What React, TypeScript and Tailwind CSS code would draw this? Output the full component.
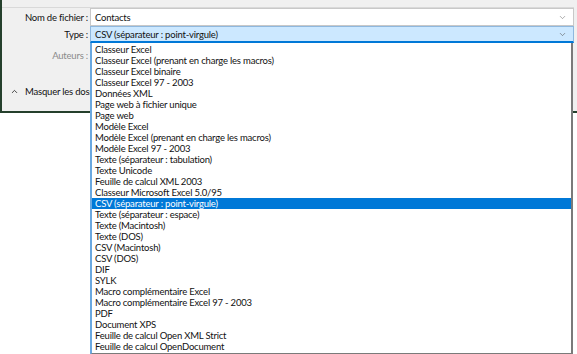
import { ChevronDown, ChevronUp } from 'lucide-react'

const formats = [
    'Classeur Excel',
    'Classeur Excel (prenant en charge les macros)',
    'Classeur Excel binaire',
    'Classeur Excel 97 - 2003',
    'Données XML',
    'Page web à fichier unique',
    'Page web',
    'Modèle Excel',
    'Modèle Excel (prenant en charge les macros)',
    'Modèle Excel 97 - 2003',
    'Texte (séparateur : tabulation)',
    'Texte Unicode',
    'Feuille de calcul XML 2003',
    'Classeur Microsoft Excel 5.0/95',
    'CSV (séparateur : point-virgule)',
    'Texte (séparateur : espace)',
    'Texte (Macintosh)',
    'Texte (DOS)',
    'CSV (Macintosh)',
    'CSV (DOS)',
    'DIF',
    'SYLK',
    'Macro complémentaire Excel',
    'Macro complémentaire Excel 97 - 2003',
    'PDF',
    'Document XPS',
    'Feuille de calcul Open XML Strict',
    'Feuille de calcul OpenDocument',
]

const selected = 'CSV (séparateur : point-virgule)'

export default function App() {
    return (
        <div className="relative h-[354px] w-[577px] overflow-hidden bg-white text-[9.5px] leading-[11px] tracking-[-0.2px] text-[#111] [font-family:Lato,'Open_Sans',sans-serif]">
            {/* save dialog behind the dropdown */}
            <div className="flex h-[113px] flex-col border-b-2 border-l-2 border-[#25402c] bg-[#f0f0f0] pr-[3px]">
                <div className="h-[8px] border-b border-[#d9d9d9]" />
                <div className="flex h-[18px] items-center">
                    <div className="w-[88px] pr-[2px] text-right">Nom de fichier :</div>
                    <div className="flex h-full flex-1 items-center justify-between border border-[#c8c8c8] bg-white pl-[4px] pr-[6px]">
                        <span>Contacts</span>
                        <ChevronDown size={9} strokeWidth={1.5} className="text-[#707070]" />
                    </div>
                </div>
                <div className="flex h-[17px] items-center">
                    <div className="w-[88px] pr-[2px] text-right">Type :</div>
                    <div className="flex h-full flex-1 items-center justify-between border border-[#8fb8de] border-b-2 border-b-[#0078d7] bg-[#cce8ff] pl-[4px] pr-[6px]">
                        <span>{selected}</span>
                        <ChevronDown size={9} strokeWidth={1.5} className="text-[#505050]" />
                    </div>
                </div>
                <div className="flex h-[24px] items-center">
                    <div className="w-[88px] pr-[2px] text-right text-[#8a8a8a]">Auteurs :</div>
                </div>
                <div className="mt-[19px] flex w-[88px] items-center gap-[6px] pl-[8px]">
                    <ChevronUp size={9} strokeWidth={2} className="shrink-0" />
                    <span className="min-w-0 flex-1 overflow-hidden whitespace-nowrap">Masquer les dossiers</span>
                </div>
            </div>

            {/* open dropdown list */}
            <ul className="absolute left-[90px] top-[43px] w-[483px] border-b-2 border-l-2 border-r-2 border-b-[#7a7a7a] border-l-[#6aa8e0] border-r-[#7a7a7a] bg-white py-[1px]">
                {formats.map((f) => (
                    <li
                        key={f}
                        className={`h-[11px] whitespace-nowrap pl-[3px] leading-[11px] ${f === selected ? 'bg-[#0078d7] text-white' : ''}`}
                    >
                        {f}
                    </li>
                ))}
            </ul>
        </div>
    )
}
